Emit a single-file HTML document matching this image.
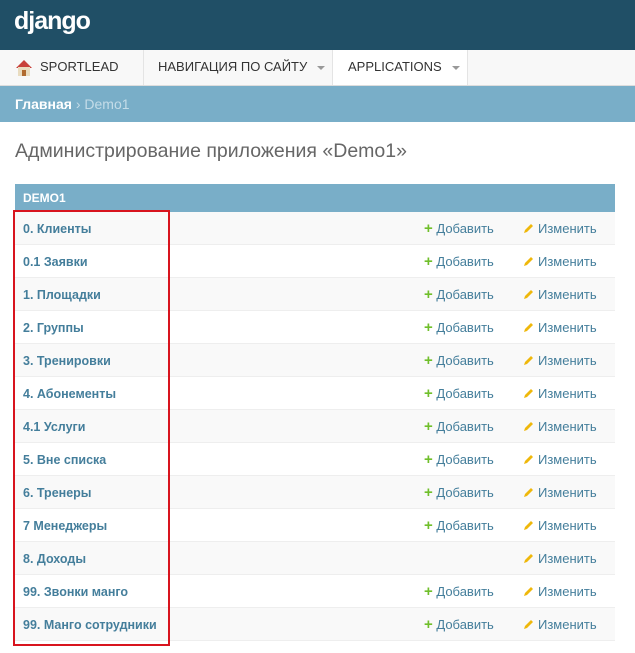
<!DOCTYPE html><html><head><meta charset="utf-8"><style>
body{margin:0;width:635px;height:653px;background:#fff;font-family:"Liberation Sans",sans-serif;position:relative;overflow:hidden}
.hd{height:50px;background:#204f66;color:#fff;font-weight:bold;font-size:25px;padding-left:14px;line-height:42px;letter-spacing:-1px}
.nav{height:35px;background:#f8f8f8;border-bottom:1px solid #ddd;position:relative;font-size:13px;color:#333}
.nav div{position:absolute;top:0;height:35px;line-height:33px;border-right:1px solid #e4e4e4;box-sizing:border-box}
.car{display:inline-block;width:0;height:0;border-left:4px solid transparent;border-right:4px solid transparent;border-top:4px solid #999;vertical-align:middle;margin-left:10px}
.bc{height:36px;background:#79aec8;color:#c4dce8;font-size:14px;line-height:36px;padding-left:15px}
.bc b{color:#fff}
h1{margin:0;position:absolute;top:140px;left:15px;font-weight:normal;font-size:19.5px;color:#666}
.tb{position:absolute;top:184px;left:15px;width:600px}
.th{height:28px;background:#79aec8;color:#fff;font-size:12px;font-weight:bold;line-height:28px;padding-left:8px}
.r{height:32px;border-bottom:1px solid #eee;position:relative;font-size:13px;line-height:34px}
.r:nth-child(odd){background:#f9f9f9}
.n{position:absolute;left:8px;font-weight:bold;color:#447e9b;font-size:12.5px}
.a{position:absolute;left:409px;color:#447e9b}
.c{position:absolute;left:508px;color:#447e9b}
.p{color:#70bf2b;font-weight:bold;font-size:15px}
.c svg{vertical-align:-1px;margin-right:3px}
.box{position:absolute;left:13px;top:210px;width:153px;height:432px;border:2px solid #d8141e}
</style></head><body>
<div class="hd">django</div>
<div class="nav">
<div style="left:0;width:144px;padding-left:14px"><svg width="20" height="20" viewBox="0 0 20 20" style="vertical-align:middle;margin-right:6px"><path d="M2 10L10 2l8 8z" fill="#c8413a"/><rect x="4" y="9" width="12" height="9" fill="#e9dcc0"/><rect x="8" y="12" width="4" height="6" fill="#b06a30"/></svg>SPORTLEAD</div>
<div style="left:144px;width:189px;padding-left:14px">НАВИГАЦИЯ ПО САЙТУ<span class="car"></span></div>
<div style="left:333px;width:135px;padding-left:15px;background:#fff">APPLICATIONS<span class="car"></span></div>
</div>
<div class="bc"><b>Главная</b> › Demo1</div>
<h1>Администрирование приложения «Demo1»</h1>
<div class="tb"><div class="th">DEMO1</div><div>
<div class="r"><span class="n">0. Клиенты</span><span class="a"><span class="p">+</span> Добавить</span><span class="c"><svg width="12" height="12" viewBox="0 0 12 12"><path d="M1 11l1-3 6-6 2 2-6 6z" fill="#efb80b"/></svg>Изменить</span></div>
<div class="r"><span class="n">0.1 Заявки</span><span class="a"><span class="p">+</span> Добавить</span><span class="c"><svg width="12" height="12" viewBox="0 0 12 12"><path d="M1 11l1-3 6-6 2 2-6 6z" fill="#efb80b"/></svg>Изменить</span></div>
<div class="r"><span class="n">1. Площадки</span><span class="a"><span class="p">+</span> Добавить</span><span class="c"><svg width="12" height="12" viewBox="0 0 12 12"><path d="M1 11l1-3 6-6 2 2-6 6z" fill="#efb80b"/></svg>Изменить</span></div>
<div class="r"><span class="n">2. Группы</span><span class="a"><span class="p">+</span> Добавить</span><span class="c"><svg width="12" height="12" viewBox="0 0 12 12"><path d="M1 11l1-3 6-6 2 2-6 6z" fill="#efb80b"/></svg>Изменить</span></div>
<div class="r"><span class="n">3. Тренировки</span><span class="a"><span class="p">+</span> Добавить</span><span class="c"><svg width="12" height="12" viewBox="0 0 12 12"><path d="M1 11l1-3 6-6 2 2-6 6z" fill="#efb80b"/></svg>Изменить</span></div>
<div class="r"><span class="n">4. Абонементы</span><span class="a"><span class="p">+</span> Добавить</span><span class="c"><svg width="12" height="12" viewBox="0 0 12 12"><path d="M1 11l1-3 6-6 2 2-6 6z" fill="#efb80b"/></svg>Изменить</span></div>
<div class="r"><span class="n">4.1 Услуги</span><span class="a"><span class="p">+</span> Добавить</span><span class="c"><svg width="12" height="12" viewBox="0 0 12 12"><path d="M1 11l1-3 6-6 2 2-6 6z" fill="#efb80b"/></svg>Изменить</span></div>
<div class="r"><span class="n">5. Вне списка</span><span class="a"><span class="p">+</span> Добавить</span><span class="c"><svg width="12" height="12" viewBox="0 0 12 12"><path d="M1 11l1-3 6-6 2 2-6 6z" fill="#efb80b"/></svg>Изменить</span></div>
<div class="r"><span class="n">6. Тренеры</span><span class="a"><span class="p">+</span> Добавить</span><span class="c"><svg width="12" height="12" viewBox="0 0 12 12"><path d="M1 11l1-3 6-6 2 2-6 6z" fill="#efb80b"/></svg>Изменить</span></div>
<div class="r"><span class="n">7 Менеджеры</span><span class="a"><span class="p">+</span> Добавить</span><span class="c"><svg width="12" height="12" viewBox="0 0 12 12"><path d="M1 11l1-3 6-6 2 2-6 6z" fill="#efb80b"/></svg>Изменить</span></div>
<div class="r"><span class="n">8. Доходы</span><span class="c"><svg width="12" height="12" viewBox="0 0 12 12"><path d="M1 11l1-3 6-6 2 2-6 6z" fill="#efb80b"/></svg>Изменить</span></div>
<div class="r"><span class="n">99. Звонки манго</span><span class="a"><span class="p">+</span> Добавить</span><span class="c"><svg width="12" height="12" viewBox="0 0 12 12"><path d="M1 11l1-3 6-6 2 2-6 6z" fill="#efb80b"/></svg>Изменить</span></div>
<div class="r"><span class="n">99. Манго сотрудники</span><span class="a"><span class="p">+</span> Добавить</span><span class="c"><svg width="12" height="12" viewBox="0 0 12 12"><path d="M1 11l1-3 6-6 2 2-6 6z" fill="#efb80b"/></svg>Изменить</span></div>
</div></div>
<div class="box"></div>
</body></html>
